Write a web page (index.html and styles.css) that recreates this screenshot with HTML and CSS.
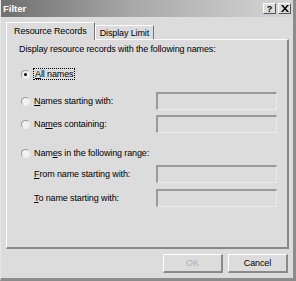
FILE: index.html
```html
<!DOCTYPE html>
<html>
<head>
  <meta charset="UTF-8" />
  <title>Filter</title>
  <link rel="stylesheet" href="styles.css">
</head>
<body>
  <div class="window">
    <div class="titlebar">
      <span class="title">Filter</span>
      <div class="caption-buttons">
        <span class="cap-btn">?</span>
        <span class="cap-btn close">
          <svg width="8" height="7" viewBox="0 0 8 7"><path d="M0 0h2l2 2.5L6 0h2L5 3.5 8 7H6L4 4.5 2 7H0l3-3.5z" fill="#000"/></svg>
        </span>
      </div>
    </div>

    <div class="content">
      <div class="tabs">
        <span class="tab active">Resource Records</span>
        <span class="tab">Display Limit</span>
      </div>

      <div class="panel">
        <div class="desc">Display resource records with the following names:</div>

        <div class="row all">
          <span class="radio checked"></span>
          <span class="label focus"><u>A</u>ll names</span>
        </div>

        <div class="row starting">
          <span class="radio"></span>
          <span class="label"><u>N</u>ames starting with:</span>
          <span class="textbox"></span>
        </div>

        <div class="row containing">
          <span class="radio"></span>
          <span class="label">Na<u>m</u>es containing:</span>
          <span class="textbox"></span>
        </div>

        <div class="row range">
          <span class="radio"></span>
          <span class="label">Nam<u>e</u>s in the following range:</span>
        </div>

        <div class="row sub from">
          <span class="label"><u>F</u>rom name starting with:</span>
          <span class="textbox"></span>
        </div>

        <div class="row sub to">
          <span class="label"><u>T</u>o name starting with:</span>
          <span class="textbox"></span>
        </div>
      </div>

      <div class="buttons">
        <span class="button disabled">OK</span>
        <span class="button">Cancel</span>
      </div>
    </div>
  </div>
</body>
</html>
```

FILE: styles.css
```css
body {
  margin: 0;
  background-color: #dcdcdc;
  font-family: "Liberation Sans", Arial, sans-serif;
  font-size: 9px;
  letter-spacing: -0.12px;
  color: #000;
}

.window {
  width: 296px;
  height: 281px;
  box-sizing: border-box;
  border-left: 1px solid #e6e6e6;
  border-right: 3px solid #8c8c8c;
  border-bottom: 3px solid #8c8c8c;
  background-color: #dcdcdc;
  display: flex;
  flex-direction: column;
}

.titlebar {
  height: 17px;
  display: flex;
  align-items: center;
  justify-content: space-between;
  padding: 0 2px 0 2px;
  background: linear-gradient(to right, #6f6f6f, #a8a8a8 45%, #d6d6d6);
}

.title {
  color: #fff;
  font-weight: bold;
  font-size: 9.5px;
  letter-spacing: 0;
}

.caption-buttons {
  display: flex;
  gap: 2px;
}

.cap-btn {
  width: 13px;
  height: 11px;
  box-sizing: border-box;
  display: flex;
  align-items: center;
  justify-content: center;
  background-color: #dcdcdc;
  border-top: 1px solid #fff;
  border-left: 1px solid #fff;
  border-right: 1px solid #555;
  border-bottom: 1px solid #555;
  font-weight: bold;
  font-size: 9px;
}

.content {
  flex: 1;
  display: flex;
  flex-direction: column;
  padding: 0 4px 0 5px;
}

.tabs {
  display: flex;
  align-items: flex-end;
  height: 18px;
  margin-top: 4px;
}

.tab {
  height: 14px;
  line-height: 14px;
  padding: 0 4px;
  border-top: 1px solid #fff;
  border-left: 1px solid #fff;
  border-right: 1px solid #777;
  margin-bottom: -1px;
}

.tab.active {
  height: 17px;
  line-height: 17px;
  padding: 0 7px;
  position: relative;
  background-color: #dcdcdc;
  z-index: 1;
}

.panel {
  height: 210px;
  box-sizing: border-box;
  border-top: 1px solid #fff;
  border-left: 1px solid #fff;
  border-right: 2px solid #888;
  border-bottom: 2px solid #888;
  padding: 0 10px 0 12px;
}

.desc {
  height: 18px;
  line-height: 18px;
}

.row {
  display: flex;
  align-items: center;
  height: 18px;
}

.row.all { margin-top: 7px; }
.row.starting { margin-top: 9px; }
.row.containing { margin-top: 5px; }
.row.range { margin-top: 11px; }
.row.from { margin-top: 3px; }
.row.to { margin-top: 6px; }

.row.sub .label {
  margin-left: 15px;
}

.radio {
  width: 9px;
  height: 9px;
  box-sizing: border-box;
  border-radius: 50%;
  border: 1px solid #9a9a9a;
  border-right-color: #f0f0f0;
  border-bottom-color: #f0f0f0;
  background-color: #f2f2f2;
  margin-left: 2px;
  margin-right: 4px;
  display: flex;
  align-items: center;
  justify-content: center;
}

.radio.checked::after {
  content: "";
  width: 3px;
  height: 3px;
  border-radius: 50%;
  background-color: #000;
}

.label {
  flex: 1;
  white-space: nowrap;
}

.label.focus {
  flex: none;
  outline: 1px dotted #000;
  padding: 0 1px;
}

.textbox {
  width: 121px;
  height: 18px;
  box-sizing: border-box;
  border-top: 2px solid #9a9a9a;
  border-left: 2px solid #9a9a9a;
  border-right: 1px solid #eaeaea;
  border-bottom: 1px solid #eaeaea;
  background-color: #dcdcdc;
}

.buttons {
  display: flex;
  justify-content: flex-end;
  gap: 5px;
  margin-top: 5px;
  padding-right: 1px;
}

.button {
  width: 60px;
  height: 19px;
  box-sizing: border-box;
  display: flex;
  align-items: center;
  justify-content: center;
  border-top: 1px solid #fff;
  border-left: 1px solid #fff;
  border-right: 2px solid #8a8a8a;
  border-bottom: 2px solid #8a8a8a;
}

.button.disabled {
  color: #b0b0b0;
}
```
